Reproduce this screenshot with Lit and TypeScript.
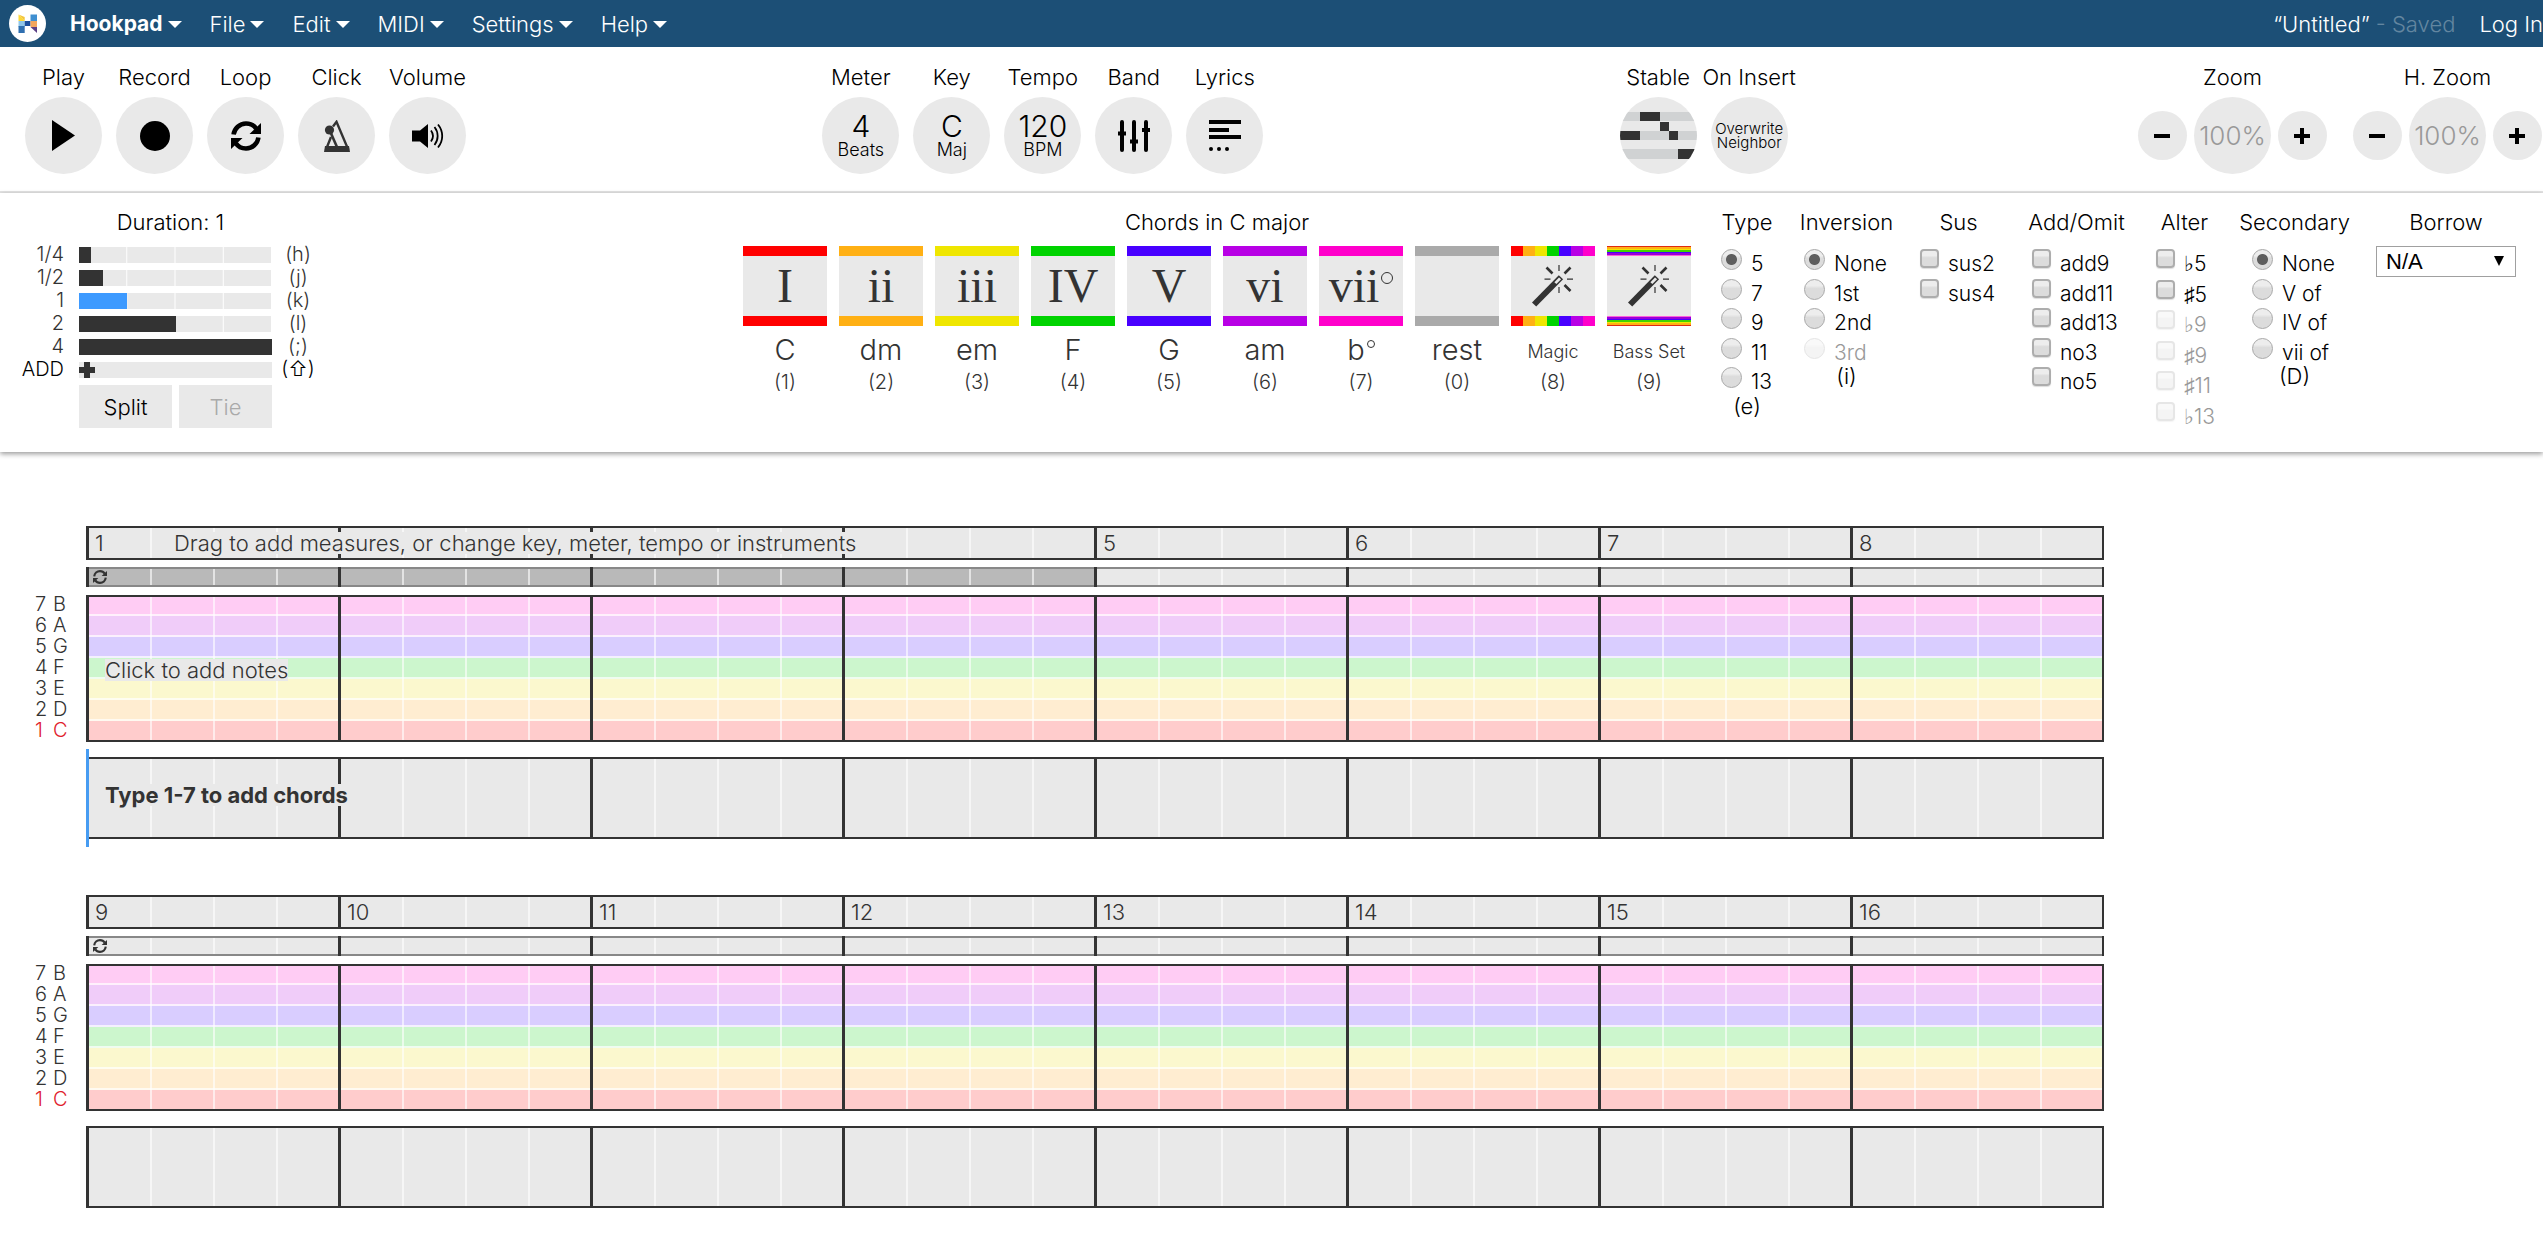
import { LitElement, html, svg, css, nothing } from "lit";
import { customElement, property, state } from "lit/decorators.js";
import { classMap } from "lit/directives/class-map.js";
import { styleMap } from "lit/directives/style-map.js";

const baseStyles = css`
  *,
  *::before,
  *::after {
    box-sizing: border-box;
  }
  button,
  input,
  select {
    font: inherit;
    color: inherit;
    margin: 0;
  }
  button {
    border: 0;
    padding: 0;
    cursor: pointer;
  }
  svg {
    display: block;
  }
`;

const refreshIcon = (size: number) => svg`
  <svg width=${size} height=${size} viewBox="0 0 30 30" aria-hidden="true">
    <g fill="none" stroke="currentColor" stroke-width="4.6">
      <path d="M2.6 13.5C3.4 7.4 8.6 2.5 15 2.5c4.400 0 8 1.900 10.200 5.200"/>
      <path d="M27.400 16.500C26.600 22.600 21.400 27.500 15 27.500c-4.400 0-8-1.900-10.200-5.200"/>
    </g>
    <path fill="currentColor" d="M30 2v11H18.500zM0 28V17h11.500z"/>
  </svg>`;

const wandIcon = svg`
  <svg width="42" height="42" viewBox="0 0 42 42" aria-hidden="true">
    <path fill="#333" d="M0 37.500 26.800 10.300l4.300 4L4.200 41.400z"/>
    <path fill="#e9e9e9" d="M22.400 17.200 27 12.400l2.100 1.900-4.700 4.800z"/>
    <g stroke="#333">
      <path stroke-width="2.600" d="M14.500 2.500l6 6M38.500 2.500l-6 6M38.500 26l-6-6"/>
      <path stroke-width="1.200" d="M27 0v6M27 22v6M12.500 14.200h6M35 14.200h6"/>
    </g>
  </svg>`;

const toolIcons = {
  play: svg`<svg width="24" height="31" viewBox="0 0 24 31" aria-hidden="true"><path d="M0 0 23 15.500 0 31z"/></svg>`,
  record: svg`<svg width="30" height="30" viewBox="0 0 30 30" aria-hidden="true"><circle cx="15" cy="15" r="15"/></svg>`,
  loop: refreshIcon(30),
  click: svg`
    <svg width="26" height="32" viewBox="0 0 26 32" aria-hidden="true">
      <path fill="none" stroke="#333" stroke-width="2.400" d="M9 6.500 12.500 1.800 23.600 28H2.600L7 17"/>
      <path fill="#333" d="M1 26h24l1 6H0z"/>
      <path fill="none" stroke="#333" stroke-width="2.600" d="M5.500 10 13 27"/>
      <circle fill="#333" cx="5.500" cy="10" r="4.600"/>
    </svg>`,
  volume: svg`
    <svg width="32" height="26" viewBox="0 0 32 26" aria-hidden="true">
      <path d="M0 7.500h8L16 1v24l-8-6.500H0z"/>
      <g fill="none" stroke="#000" stroke-width="1.800">
        <path d="M19 7.500c2.400 3.300 2.400 7.700 0 11"/>
        <path d="M22.500 4c4.200 5.400 4.200 12.600 0 18"/>
        <path d="M26 1.500c5.600 6.900 5.600 16.100 0 23"/>
      </g>
    </svg>`,
  band: svg`
    <svg width="32" height="32" viewBox="0 0 32 32" aria-hidden="true">
      <g stroke="#000" stroke-width="4" stroke-linecap="round">
        <path d="M4 2v28M16 2v28M28 2v28"/>
      </g>
      <path d="M0 11.500h8v4H0zM12 19.500h8v4h-8zM24 8h8v4h-8z"/>
    </svg>`,
  lyrics: svg`
    <svg width="32" height="32" viewBox="0 0 32 32" aria-hidden="true">
      <path d="M0 0h32v4H0zM0 8h20v4H0zM0 15h32v4H0z"/>
      <circle cx="2" cy="29" r="2"/><circle cx="10" cy="29" r="2"/><circle cx="18" cy="29" r="2"/>
    </svg>`,
  stable: svg`
    <svg width="77" height="77" viewBox="0 0 77 77" aria-hidden="true">
      <path fill="#d0d2d3" d="M0 15h77v9H0zM0 34h77v9H0zM0 52h77v10H0z"/>
      <path fill="#333" d="M20 15h20v9H20zM40 25h9v9h-9zM49 34h9v9h-9zM0 34h20v9H0zM58 52h19v10H58z"/>
    </svg>`,
};

interface Tool {
  label: string;
  icon?: unknown;
  big?: string;
  small?: string;
  lines?: string[];
}

@customElement("menu-bar")
class MenuBar extends LitElement {
  static styles = [
    baseStyles,
    css`
      :host {
        display: flex;
        align-items: center;
        height: 47px;
        padding-left: 9px;
        background: #1c4f76;
        color: #fff;
        white-space: nowrap;
        overflow: hidden;
      }
      .logo {
        margin-right: 24px;
      }
      nav {
        display: flex;
        gap: 28px;
      }
      .item {
        display: flex;
        align-items: center;
        gap: 5px;
        background: none;
      }
      .item.brand {
        font-size: 21px;
        font-weight: 700;
      }
      .caret {
        border: 7px solid transparent;
        border-top-color: #fff;
        border-bottom: 0;
        margin-top: 2px;
      }
      .account {
        display: flex;
        gap: 24px;
        margin-left: auto;
      }
      .status {
        color: #6386a0;
      }
      a {
        color: inherit;
        text-decoration: none;
      }
    `,
  ];

  private menus = ["Hookpad", "File", "Edit", "MIDI", "Settings", "Help"];

  render() {
    return html`
      <a class="logo" href="#" aria-label="Home">
        <svg width="37" height="37" viewBox="0 0 37 37" aria-hidden="true">
          <circle cx="18.500" cy="18.500" r="18.500" fill="#fff" />
          <path fill="#fdd835" d="M9.500 9.500v6.500h6.200z" />
          <path fill="#f3c53a" d="M9.500 9.500l6.200 6.500V12z" />
          <path fill="#8fc6ea" d="M9.500 16h6.200v6H9.500z" />
          <path fill="#2f6fb0" d="M9.500 21h6.200v7H9.500z" />
          <path fill="#1d4f9c" d="M15.700 16h5.800v5h-5.800z" />
          <path fill="#3f8fd0" d="M21.500 9.500H28V16h-6.500z" />
          <path fill="#f2a65e" d="M21.500 16H28v6h-6.500z" />
          <path fill="#5b3f86" d="M21.500 22H28v6z" />
        </svg>
      </a>
      <nav>
        ${this.menus.map(
          (name, i) => html`
            <button class=${classMap({ item: true, brand: i === 0 })}>
              <span>${name}</span><span class="caret"></span>
            </button>
          `,
        )}
      </nav>
      <div class="account">
        <span>“Untitled” <span class="status">- Saved</span></span>
        <a href="#">Log In</a>
      </div>
    `;
  }
}

@customElement("tool-bar")
class ToolBar extends LitElement {
  static styles = [
    baseStyles,
    css`
      :host {
        display: flex;
        justify-content: space-between;
        padding: 15px 1px 17px 25px;
        border-bottom: 2px solid #e4e4e4;
        white-space: nowrap;
      }
      .group {
        display: flex;
        gap: 14px;
      }
      .group.zooms {
        gap: 26px;
        margin-left: -6px;
      }
      .tool {
        display: flex;
        flex-direction: column;
        align-items: center;
        gap: 5px;
        width: 77px;
      }
      .tool.zoom {
        width: auto;
      }
      .label {
        line-height: 30px;
      }
      .round {
        display: flex;
        flex-direction: column;
        align-items: center;
        justify-content: center;
        width: 77px;
        height: 77px;
        border-radius: 50%;
        overflow: hidden;
        background: #e9e9e9;
        color: #000;
      }
      .big {
        font-size: 30px;
        line-height: 28px;
      }
      .small {
        font-size: 18px;
        line-height: 20px;
      }
      .tiny {
        font-size: 15px;
        line-height: 14px;
      }
      .zoom-row {
        display: flex;
        align-items: center;
        gap: 7px;
      }
      .round.step {
        width: 49px;
        height: 49px;
      }
      .round.level {
        font-size: 26px;
        color: #999;
      }
    `,
  ];

  private groups: Tool[][] = [
    [
      { label: "Play", icon: toolIcons.play },
      { label: "Record", icon: toolIcons.record },
      { label: "Loop", icon: toolIcons.loop },
      { label: "Click", icon: toolIcons.click },
      { label: "Volume", icon: toolIcons.volume },
    ],
    [
      { label: "Meter", big: "4", small: "Beats" },
      { label: "Key", big: "C", small: "Maj" },
      { label: "Tempo", big: "120", small: "BPM" },
      { label: "Band", icon: toolIcons.band },
      { label: "Lyrics", icon: toolIcons.lyrics },
    ],
    [
      { label: "Stable", icon: toolIcons.stable },
      { label: "On Insert", lines: ["Overwrite", "Neighbor"] },
    ],
  ];

  private renderTool(tool: Tool) {
    return html`
      <div class="tool">
        <span class="label">${tool.label}</span>
        <button class="round" aria-label=${tool.label}>
          ${tool.icon ?? nothing}
          ${tool.big
            ? html`<span class="big">${tool.big}</span><span class="small">${tool.small}</span>`
            : nothing}
          ${tool.lines?.map((line) => html`<span class="tiny">${line}</span>`)}
        </button>
      </div>
    `;
  }

  private renderZoom(label: string) {
    return html`
      <div class="tool zoom">
        <span class="label">${label}</span>
        <div class="zoom-row">
          <button class="round step" aria-label="${label} out">
            <svg width="16" height="16" viewBox="0 0 16 16"><path d="M0 6h16v4H0z" /></svg>
          </button>
          <span class="round level">100%</span>
          <button class="round step" aria-label="${label} in">
            <svg width="16" height="16" viewBox="0 0 16 16"><path d="M0 6h6V0h4v6h6v4h-6v6H6v-6H0z" /></svg>
          </button>
        </div>
      </div>
    `;
  }

  render() {
    return html`
      ${this.groups.map((group) => html`<div class="group">${group.map((t) => this.renderTool(t))}</div>`)}
      <div class="group zooms">${this.renderZoom("Zoom")}${this.renderZoom("H. Zoom")}</div>
    `;
  }
}

@customElement("duration-panel")
class DurationPanel extends LitElement {
  static styles = [
    baseStyles,
    css`
      :host {
        display: block;
        width: 315px;
        color: #333;
      }
      .title {
        padding-left: 26px;
        line-height: 30px;
        text-align: center;
        color: #000;
      }
      .rows {
        display: flex;
        flex-direction: column;
        margin-top: 6px;
      }
      .row {
        display: grid;
        grid-template-columns: 64px 193px 34px;
        column-gap: 15px;
        align-items: center;
        width: 100%;
        height: 23px;
        background: none;
        font-size: 20px;
        line-height: 23px;
      }
      .row.add {
        color: #000;
      }
      .name {
        text-align: right;
      }
      .key {
        margin-left: -12px;
        text-align: center;
      }
      .track {
        display: block;
        height: 16px;
        background-color: #e9e9e9;
        background-image: linear-gradient(to left, #fff 1px, transparent 1px);
        background-size: 25% 100%;
      }
      .fill {
        display: block;
        height: 100%;
        background: #333;
      }
      .row.selected .fill {
        background: #3d9aff;
      }
      .add .track {
        background-image: none;
      }
      .actions {
        display: flex;
        gap: 7px;
        width: 193px;
        margin: 4px 0 0 79px;
      }
      .action {
        flex: 1;
        height: 43px;
        background: #e9e9e9;
        color: #000;
      }
      .action:disabled {
        color: #aaa;
      }
    `,
  ];

  @state() private selected = "1";

  private durations = [
    { name: "1/4", beats: 0.25, key: "h" },
    { name: "1/2", beats: 0.5, key: "j" },
    { name: "1", beats: 1, key: "k" },
    { name: "2", beats: 2, key: "l" },
    { name: "4", beats: 4, key: ";" },
  ];

  render() {
    return html`
      <div class="title">Duration: ${this.selected}</div>
      <div class="rows">
        ${this.durations.map(
          (d) => html`
            <button
              class=${classMap({ row: true, selected: d.name === this.selected })}
              @click=${() => (this.selected = d.name)}
            >
              <span class="name">${d.name}</span>
              <span class="track"><span class="fill" style=${styleMap({ width: `${d.beats * 25}%` })}></span></span>
              <span class="key">(${d.key})</span>
            </button>
          `,
        )}
        <button class="row add">
          <span class="name">ADD</span>
          <span class="track">
            <svg width="16" height="16" viewBox="0 0 16 16"><path fill="#333" d="M0 5h5V0h6v5h5v6h-5v5H5v-5H0z" /></svg>
          </span>
          <span class="key">(⇧)</span>
        </button>
      </div>
      <div class="actions">
        <button class="action">Split</button>
        <button class="action" disabled>Tie</button>
      </div>
    `;
  }
}

@customElement("chord-palette")
class ChordPalette extends LitElement {
  static styles = [
    baseStyles,
    css`
      :host {
        display: block;
        color: #333;
      }
      .title {
        line-height: 30px;
        text-align: center;
        color: #000;
      }
      .chords {
        display: flex;
        gap: 12px;
        margin-top: 9px;
      }
      .chord {
        display: flex;
        flex-direction: column;
        align-items: center;
        width: 84px;
        background: none;
        white-space: nowrap;
      }
      .tile {
        display: flex;
        flex-direction: column;
        align-items: center;
        justify-content: space-between;
        width: 100%;
        height: 80px;
        background: #e9e9e9;
        font-family: "Liberation Serif", "Times New Roman", serif;
        font-size: 48px;
        line-height: 60px;
      }
      .bar {
        width: 100%;
        height: 10px;
        background: var(--c, #aaa);
      }
      .face {
        display: flex;
        align-items: center;
        height: 60px;
      }
      .bar.magic {
        background: linear-gradient(
          to right,
          #f00 12px,
          #ffb014 12px 24px,
          #efe600 24px 36px,
          #00d300 36px 48px,
          #4800ff 48px 60px,
          #b800e5 60px 72px,
          #ff00cb 72px
        );
      }
      .bar.bass {
        background: linear-gradient(
          to bottom,
          #e02b10 1px,
          #ffb014 1px 3px,
          #efe600 3px 4px,
          #43d300 4px 6px,
          #4800ff 6px 7px,
          #9a00d8 7px 9px,
          #ff5fdc 9px
        );
      }
      .bar.bass.flip {
        transform: scaleY(-1);
      }
      .degree {
        display: inline-block;
        width: 12px;
        height: 12px;
        margin-left: 2px;
        border: 1px solid #333;
        border-radius: 50%;
        vertical-align: 18px;
      }
      .name .degree {
        width: 8px;
        height: 8px;
        vertical-align: 12px;
      }
      .name {
        height: 42px;
        padding-top: 4px;
        font-size: 29px;
        line-height: 40px;
      }
      .name.minor {
        padding-top: 6px;
        font-size: 18px;
      }
      .key {
        font-size: 20px;
        line-height: 28px;
      }
    `,
  ];

  private chords = [
    { numeral: "I", name: "C", key: 1, color: "#ff0000" },
    { numeral: "ii", name: "dm", key: 2, color: "#ffb014" },
    { numeral: "iii", name: "em", key: 3, color: "#efe600" },
    { numeral: "IV", name: "F", key: 4, color: "#00d300" },
    { numeral: "V", name: "G", key: 5, color: "#4800ff" },
    { numeral: "vi", name: "am", key: 6, color: "#b800e5" },
    { numeral: "vii", name: "b", key: 7, color: "#ff00cb", dim: true },
    { numeral: "", name: "rest", key: 0, color: "#aaaaaa" },
  ];

  private renderSpecial(name: string, key: number, kind: string) {
    return html`
      <button class="chord">
        <span class="tile">
          <span class="bar ${kind}"></span>
          <span class="face">${wandIcon}</span>
          <span class="bar ${kind} ${kind === "bass" ? "flip" : ""}"></span>
        </span>
        <span class="name minor">${name}</span>
        <span class="key">(${key})</span>
      </button>
    `;
  }

  render() {
    const degree = html`<span class="degree"></span>`;
    return html`
      <div class="title">Chords in C major</div>
      <div class="chords">
        ${this.chords.map(
          (c) => html`
            <button class="chord">
              <span class="tile" style=${styleMap({ "--c": c.color })}>
                <span class="bar"></span>
                <span class="face"><span>${c.numeral}${c.dim ? degree : nothing}</span></span>
                <span class="bar"></span>
              </span>
              <span class="name">${c.name}${c.dim ? degree : nothing}</span>
              <span class="key">(${c.key})</span>
            </button>
          `,
        )}
        ${this.renderSpecial("Magic", 8, "magic")}${this.renderSpecial("Bass Set", 9, "bass")}
      </div>
    `;
  }
}

interface OptionColumn {
  title: string;
  kind: "radio" | "checkbox";
  options: string[];
  disabled?: string[];
  inset: string;
  key?: string;
}

@customElement("chord-options")
class ChordOptions extends LitElement {
  static styles = [
    baseStyles,
    css`
      :host {
        display: grid;
        grid-template-columns: 52px 93px 77px 105px 57px 109px 140px;
        column-gap: 27px;
        white-space: nowrap;
      }
      .column {
        display: flex;
        flex-direction: column;
        min-width: 0;
      }
      .title {
        display: flex;
        justify-content: center;
        line-height: 30px;
      }
      .list {
        display: grid;
        grid-auto-rows: 30px 29px;
        margin-top: 12px;
      }
      .list.tall {
        grid-auto-rows: 31px 30px;
      }
      .list.small {
        padding-left: 4px;
      }
      .list.medium {
        padding-left: 8px;
      }
      .list.large {
        padding-left: 12px;
      }
      .option {
        display: flex;
        align-items: flex-start;
        gap: 9px;
        font-size: 21px;
        line-height: 30px;
      }
      .option.off {
        color: #999;
      }
      input {
        appearance: none;
        flex: none;
        width: 21px;
        height: 21px;
        border: 1px solid #a8a8a8;
        border-radius: 50%;
        background: linear-gradient(#ededed 30%, #dcdcdc 45%);
      }
      input[type="radio"]:checked {
        background:
          radial-gradient(circle, #5e5e5e 5px, transparent 6px),
          linear-gradient(#ededed 30%, #dcdcdc 45%);
      }
      input[type="checkbox"] {
        width: 19px;
        height: 19px;
        border: 2px solid #adadad;
        border-radius: 4px;
        box-shadow: 0 1px 1px #ddd;
      }
      input:disabled {
        opacity: 0.3;
      }
      .key {
        line-height: 18px;
        text-align: center;
      }
      .picker {
        position: relative;
        display: block;
        margin-top: 9px;
      }
      select {
        appearance: none;
        width: 100%;
        height: 31px;
        padding: 0 9px;
        border: 1px solid #a0a0a0;
        border-radius: 0;
        background: #fff;
        font-family: "Liberation Sans", Arial, sans-serif;
        font-size: 22px;
      }
      .arrow {
        position: absolute;
        top: 10px;
        right: 12px;
        border: 5px solid transparent;
        border-top: 10px solid #000;
        border-bottom: 0;
        pointer-events: none;
      }
    `,
  ];

  private columns: OptionColumn[] = [
    { title: "Type", kind: "radio", options: ["5", "7", "9", "11", "13"], inset: "none", key: "e" },
    {
      title: "Inversion",
      kind: "radio",
      options: ["None", "1st", "2nd", "3rd"],
      disabled: ["3rd"],
      inset: "small",
      key: "i",
    },
    { title: "Sus", kind: "checkbox", options: ["sus2", "sus4"], inset: "none" },
    { title: "Add/Omit", kind: "checkbox", options: ["add9", "add11", "add13", "no3", "no5"], inset: "medium" },
    {
      title: "Alter",
      kind: "checkbox",
      options: ["♭5", "♯5", "♭9", "♯9", "♯11", "♭13"],
      disabled: ["♭9", "♯9", "♯11", "♭13"],
      inset: "tall",
    },
    { title: "Secondary", kind: "radio", options: ["None", "V of", "IV of", "vii of"], inset: "large", key: "D" },
  ];

  private renderColumn(col: OptionColumn) {
    return html`
      <div class="column" role="group" aria-label=${col.title}>
        <span class="title">${col.title}</span>
        <div class="list ${col.inset}">
          ${col.options.map((name, i) => {
            const off = col.disabled?.includes(name) ?? false;
            return html`
              <label class=${classMap({ option: true, off })}>
                <input
                  type=${col.kind}
                  name=${col.title}
                  ?checked=${col.kind === "radio" && i === 0}
                  ?disabled=${off}
                />
                <span>${name}</span>
              </label>
            `;
          })}
        </div>
        ${col.key ? html`<span class="key">(${col.key})</span>` : nothing}
      </div>
    `;
  }

  render() {
    return html`
      ${this.columns.map((col) => this.renderColumn(col))}
      <div class="column">
        <label class="title" for="borrow">Borrow</label>
        <span class="picker">
          <select id="borrow">
            <option>N/A</option>
          </select>
          <span class="arrow"></span>
        </span>
      </div>
    `;
  }
}

@customElement("staff-system")
class StaffSystem extends LitElement {
  static styles = [
    baseStyles,
    css`
      :host {
        display: grid;
        grid-template-columns: 86px 1fr;
        color: #333;
      }
      .strip {
        grid-column: 2;
        position: relative;
        display: grid;
        grid-template-columns: repeat(8, 1fr);
        border-right: 2px solid #333;
      }
      .measure {
        border-left: 3px solid #333;
        background-image: linear-gradient(to right, transparent 1px, rgba(255, 255, 255, 0.6) 1px 3px, transparent 3px);
        background-size: 25% 100%;
        background-origin: border-box;
      }
      .ruler,
      .notes,
      .harmony {
        border-top: 2px solid #333;
        border-bottom: 2px solid #333;
      }
      .ruler {
        height: 34px;
        background: #e9e9e9;
      }
      .ruler .measure {
        padding-left: 6px;
        line-height: 30px;
      }
      .repeat {
        height: 20px;
        margin-top: 7px;
        background: #e9e9e9;
      }
      .repeat .measure {
        display: flex;
        align-items: center;
        padding-left: 4px;
        box-shadow:
          inset 0 2px #888,
          inset 0 -2px #888;
      }
      .repeat .measure.active {
        background-color: #b9b9b9;
      }
      .labels {
        grid-column: 1;
        margin: 7px 0 0 35px;
        font-size: 20px;
        line-height: 21px;
      }
      .pitch {
        display: grid;
        grid-template-columns: 18px auto;
      }
      .pitch.tonic {
        color: #e0202c;
      }
      .notes {
        height: 147px;
        margin-top: 8px;
      }
      .lanes {
        grid-area: 1 / 1 / 2 / -1;
        display: grid;
        grid-template-rows: 19px repeat(5, 21px) 19px;
      }
      .lane {
        border-bottom: 2px solid rgba(255, 255, 255, 0.7);
        background: var(--lane);
      }
      .lane:last-child {
        border-bottom: 0;
      }
      .notes .measure {
        grid-row: 1;
      }
      .harmony {
        height: 82px;
        margin-top: 15px;
        background: #e9e9e9;
      }
      .hint {
        position: absolute;
        left: 19px;
        background: #e9e9e9;
        line-height: 22px;
        white-space: nowrap;
      }
      .ruler .hint {
        top: 4px;
        left: 88px;
      }
      .notes .hint {
        top: 62px;
      }
      .harmony .hint {
        top: 25px;
        font-weight: 700;
      }
      .cursor {
        position: absolute;
        top: -10px;
        bottom: -10px;
        left: 0;
        width: 3px;
        background: #479cf2;
      }
    `,
  ];

  @property({ type: Number }) first = 1;
  @property({ type: Number }) looped = 0;
  @property({ type: Boolean }) active = false;

  private lanes = [
    { degree: 7, pitch: "B", color: "#ffccf4" },
    { degree: 6, pitch: "A", color: "#f0ccf9" },
    { degree: 5, pitch: "G", color: "#d9cdff" },
    { degree: 4, pitch: "F", color: "#ccf6cd" },
    { degree: 3, pitch: "E", color: "#fbf8ce" },
    { degree: 2, pitch: "D", color: "#ffedd1" },
    { degree: 1, pitch: "C", color: "#ffcccc" },
  ];

  render() {
    const measures = Array.from({ length: 8 }, (_, i) => this.first + i);
    const hiddenByHint = (n: number) => this.active && n > 1 && n < 5;
    return html`
      <div class="strip ruler">
        ${measures.map((n) => html`<span class="measure">${hiddenByHint(n) ? nothing : n}</span>`)}
        ${this.active
          ? html`<span class="hint">Drag to add measures, or change key, meter, tempo or instruments</span>`
          : nothing}
      </div>
      <div class="strip repeat">
        ${measures.map(
          (_, i) => html`
            <span class=${classMap({ measure: true, active: i < this.looped })}>
              ${i === 0 ? refreshIcon(14) : nothing}
            </span>
          `,
        )}
      </div>
      <div class="labels">
        ${this.lanes.map(
          (l) => html`
            <div class=${classMap({ pitch: true, tonic: l.degree === 1 })}>
              <span>${l.degree}</span><span>${l.pitch}</span>
            </div>
          `,
        )}
      </div>
      <div class="strip notes">
        <div class="lanes">
          ${this.lanes.map((l) => html`<div class="lane" style=${styleMap({ "--lane": l.color })}></div>`)}
        </div>
        ${measures.map((_, i) => html`<span class="measure" style=${styleMap({ gridColumn: String(i + 1) })}></span>`)}
        ${this.active ? html`<span class="hint">Click to add notes</span>` : nothing}
      </div>
      <div class="strip harmony">
        ${measures.map(() => html`<span class="measure"></span>`)}
        ${this.active ? html`<span class="hint">Type 1-7 to add chords</span><span class="cursor"></span>` : nothing}
      </div>
    `;
  }
}

@customElement("app-root")
class AppRoot extends LitElement {
  static styles = [
    baseStyles,
    css`
      :host {
        display: block;
        min-height: 100vh;
        overflow: hidden;
        background: #fff;
        color: #000;
        font-family: Inter, "Noto Sans", sans-serif;
        font-size: 22px;
        font-weight: 300;
      }
      .editor {
        display: flex;
        padding: 14px 27px 20px 0;
        box-shadow: 0 2px 5px rgba(0, 0, 0, 0.4);
      }
      chord-palette {
        margin-left: auto;
      }
      chord-options {
        margin-left: 30px;
      }
      main {
        display: flex;
        flex-direction: column;
        gap: 56px;
        padding: 74px 439px 40px 0;
      }
    `,
  ];

  render() {
    return html`
      <menu-bar></menu-bar>
      <tool-bar></tool-bar>
      <section class="editor">
        <duration-panel></duration-panel>
        <chord-palette></chord-palette>
        <chord-options></chord-options>
      </section>
      <main>
        <staff-system .first=${1} .looped=${4} .active=${true}></staff-system>
        <staff-system .first=${9}></staff-system>
      </main>
    `;
  }
}
